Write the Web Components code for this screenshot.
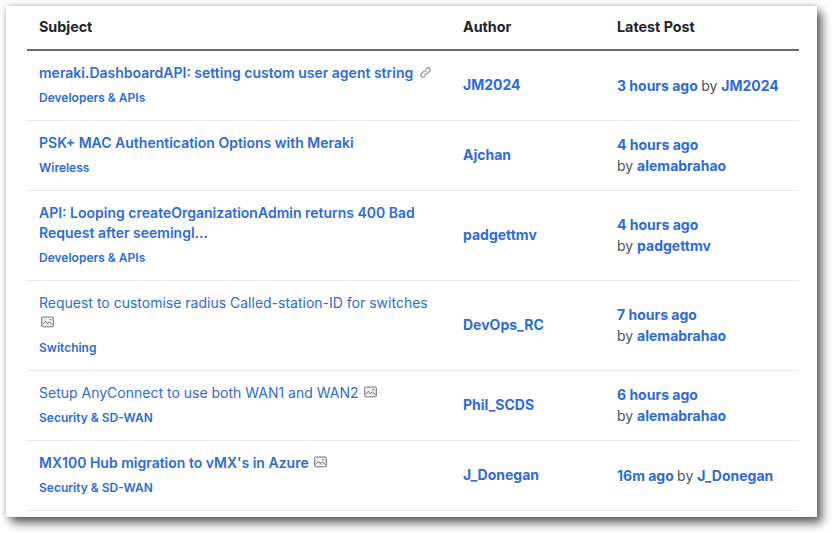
<!DOCTYPE html>
<html>
<head>
<meta charset="utf-8">
<title>Latest topics</title>
<style>
  html, body { margin: 0; height: 100%; background: #fff; overflow: hidden; }
  body { font-family: Inter, "Liberation Sans", sans-serif; }
</style>
</head>
<body>
<template id="topic-window-tpl">
  <style>
    :host { display: block; width: 811px; height: 511px; margin: 6px 0 0 6px; padding: 0 18px 0 21px; box-sizing: border-box; background: #fff; box-shadow: 0 0 6px rgba(0,0,0,.22), 5px 6px 9px rgba(0,0,0,.6); overflow: hidden; }
  </style>
  <slot></slot>
</template>
<template id="topic-head-tpl">
  <style>
    :host { display: grid; grid-template-columns: 424px 154px 1fr; height: 45px; box-sizing: border-box; border-bottom: 2px solid #696c75; color: #212328; font-size: 14.3px; font-weight: 700; line-height: 42px; }
    span { padding-left: 12px; }
  </style>
  <span>Subject</span><span>Author</span><span>Latest Post</span>
</template>
<template id="topic-link-tpl">
  <style>
    :host { display: inline; color: #2e6bd6; font-weight: 700; }
  </style>
  <slot></slot>
</template>
<template id="topic-icon-tpl">
  <style>
    :host { display: inline-block; width: 13px; height: 13px; margin-left: 2px; vertical-align: -1px; }
    svg { display: block; }
  </style>
  <svg id="link" width="13" height="13" viewBox="0 0 13 13" fill="none" stroke="#85878d" stroke-width="1.1"><path d="M5.4 7.600a2 2 0 0 0 2.900 0l2.400-2.400a2 2 0 0 0-2.900-2.900L6.700 3.400"/><path d="M7.600 5.400a2 2 0 0 0-2.900 0L2.300 7.800a2 2 0 0 0 2.900 2.900l1.100-1.100"/></svg>
  <svg id="image" width="13" height="12" viewBox="0 0 13 12" fill="none" stroke="#77797f"><rect x=".7" y="1" width="11.600" height="9.800" rx=".8" fill="#eeeef0"/><path d="M1.500 8.500l3-3.200 2.600 3.200M6.200 7.500l2.200-1.500 3.200 2.600M8.400 3.600h1.800"/></svg>
</template>
<template id="topic-row-tpl">
  <style>
    :host { display: grid; grid-template-columns: 424px 154px 1fr; align-items: center; box-sizing: border-box; padding: 12px 0 13px; border-bottom: 1px solid #e8e9ee; color: #2e6bd6; font-size: 14px; font-weight: 700; line-height: 20px; }
    :host([read]) .title { font-weight: 400; }
    .cell { padding-left: 12px; }
    .title { font-weight: 600; padding-right: 12px; }
    .board { margin-top: 6px; font-size: 12px; font-weight: 600; line-height: 18px; }
    .latest { line-height: 21px; color: #4f525a; font-weight: 400; }
  </style>
  <div class="cell">
    <div class="title"><slot></slot></div>
    <div class="board"><slot name="board"></slot></div>
  </div>
  <div class="cell"><slot name="author"></slot></div>
  <div class="cell latest"><slot name="latest"></slot></div>
</template>

<topic-window>
  <topic-head></topic-head>
  <topic-row>meraki.DashboardAPI: setting custom user agent string <topic-icon kind="link"></topic-icon>
    <span slot="board">Developers &amp; APIs</span><span slot="author">JM2024</span>
    <span slot="latest"><topic-link>3 hours ago</topic-link> by <topic-link>JM2024</topic-link></span></topic-row>
  <topic-row>PSK+ MAC Authentication Options with Meraki
    <span slot="board">Wireless</span><span slot="author">Ajchan</span>
    <span slot="latest"><topic-link>4 hours ago</topic-link><br>by <topic-link>alemabrahao</topic-link></span></topic-row>
  <topic-row>API: Looping createOrganizationAdmin returns 400 Bad Request after seemingl...
    <span slot="board">Developers &amp; APIs</span><span slot="author">padgettmv</span>
    <span slot="latest"><topic-link>4 hours ago</topic-link><br>by <topic-link>padgettmv</topic-link></span></topic-row>
  <topic-row read>Request to customise radius Called-station-ID for switches <topic-icon kind="image"></topic-icon>
    <span slot="board">Switching</span><span slot="author">DevOps_RC</span>
    <span slot="latest"><topic-link>7 hours ago</topic-link><br>by <topic-link>alemabrahao</topic-link></span></topic-row>
  <topic-row read>Setup AnyConnect to use both WAN1 and WAN2 <topic-icon kind="image"></topic-icon>
    <span slot="board">Security &amp; SD-WAN</span><span slot="author">Phil_SCDS</span>
    <span slot="latest"><topic-link>6 hours ago</topic-link><br>by <topic-link>alemabrahao</topic-link></span></topic-row>
  <topic-row>MX100 Hub migration to vMX's in Azure <topic-icon kind="image"></topic-icon>
    <span slot="board">Security &amp; SD-WAN</span><span slot="author">J_Donegan</span>
    <span slot="latest"><topic-link>16m ago</topic-link> by <topic-link>J_Donegan</topic-link></span></topic-row>
</topic-window>

<script>
  // each element just stamps its template into an open shadow root
  function define(name, tplId, setup) {
    customElements.define(name, class extends HTMLElement {
      constructor() {
        super();
        this.attachShadow({ mode: 'open' });
        this.shadowRoot.appendChild(document.getElementById(tplId).content.cloneNode(true));
      }
      connectedCallback() {
        if (setup) setup(this);
      }
    });
  }
  define('topic-window', 'topic-window-tpl');
  define('topic-head', 'topic-head-tpl');
  define('topic-link', 'topic-link-tpl');
  define('topic-row', 'topic-row-tpl');
  define('topic-icon', 'topic-icon-tpl', el => {
    // keep only the glyph this icon asks for
    el.shadowRoot.querySelectorAll('svg').forEach(svg => {
      if (svg.id !== el.getAttribute('kind')) svg.remove();
    });
  });
</script>
</body>
</html>
